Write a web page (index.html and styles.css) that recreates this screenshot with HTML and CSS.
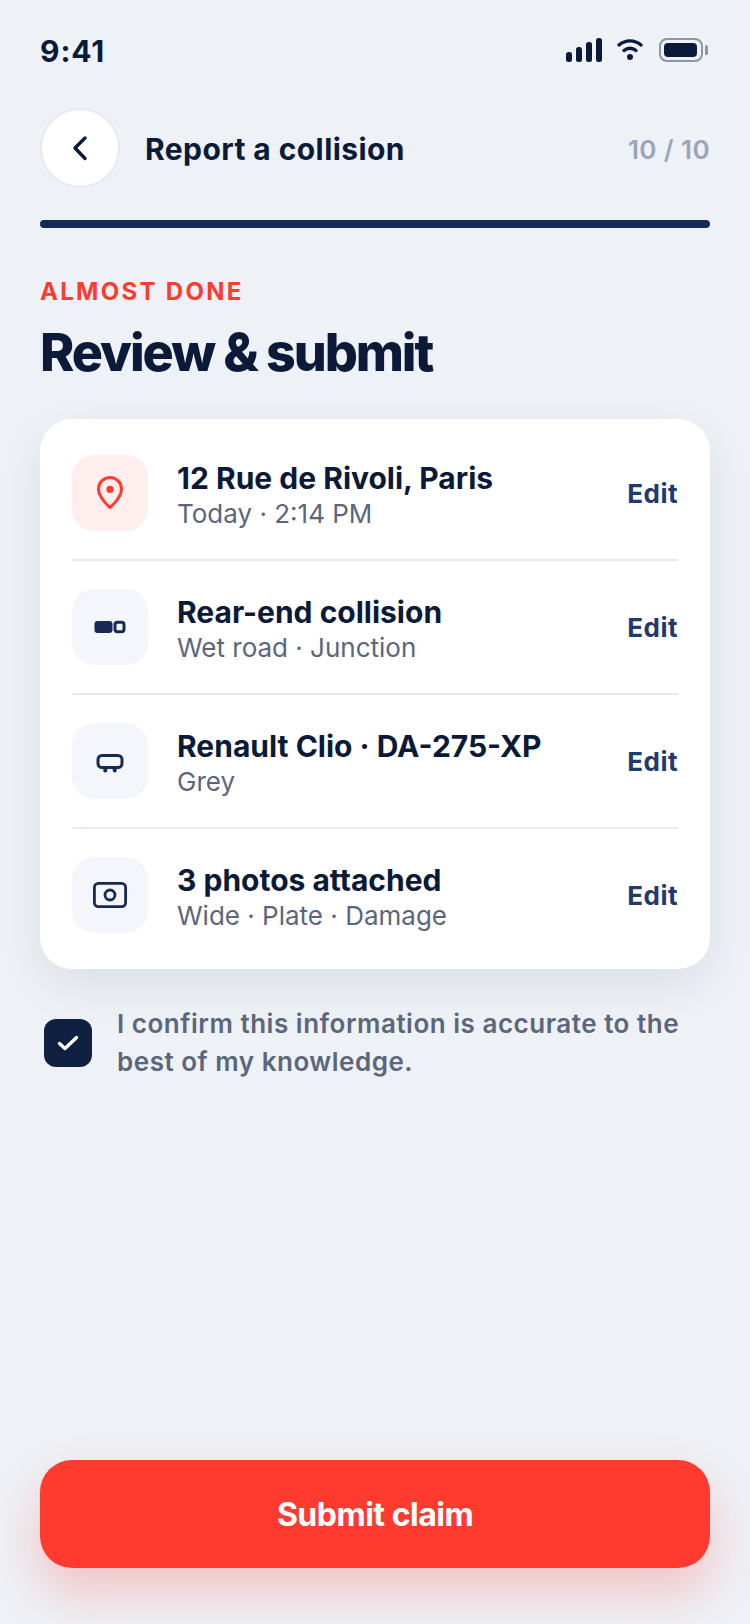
FILE: index.html
```html
<!DOCTYPE html>
<html>

<head>
    <meta charset="utf-8">
    <title>Report a collision</title>
    <link rel="stylesheet" href="styles.css">
</head>

<body>
    <div class="screen">
        <div class="status">
            <span class="time">9:41</span>
            <div class="status-icons">
                <svg class="signal" width="36" height="24" viewBox="0 0 36 24">
                    <rect x="0" y="14" width="6" height="10" rx="2.500" fill="#0b1a38" />
                    <rect x="10" y="9" width="6" height="15" rx="2.500" fill="#0b1a38" />
                    <rect x="20" y="4" width="6" height="20" rx="2.500" fill="#0b1a38" />
                    <rect x="30" y="0" width="6" height="24" rx="2.500" fill="#0b1a38" />
                </svg>
                <svg class="wifi" width="26" height="24" viewBox="0 0 26 24" fill="none" stroke="#0b1a38" stroke-width="3.400" stroke-linecap="round">
                    <path d="M2 7C8.500 1.500 17.500 1.500 24 7" />
                    <path d="M7 12.500C10.500 9.500 15.500 9.500 19 12.500" />
                    <circle cx="13" cy="19" r="3" fill="#0b1a38" stroke="none" />
                </svg>
                <svg width="49" height="24" viewBox="0 0 49 24">
                    <rect x="1" y="1" width="42" height="22" rx="7" fill="none" stroke="#8e95a6" stroke-width="2" />
                    <rect x="5" y="5" width="33" height="14" rx="4" fill="#0b1a38" />
                    <rect x="46" y="7" width="3" height="10" rx="1.500" fill="#8e95a6" />
                </svg>
            </div>
        </div>

        <div class="nav">
            <div class="back">
                <svg width="24" height="28" viewBox="0 0 24 28" fill="none" stroke="#0b1a38" stroke-width="3.400" stroke-linecap="round" stroke-linejoin="round">
                    <path d="M17 4L7 14L17 24.500" />
                </svg>
            </div>
            <div class="nav-title">Report a collision</div>
            <div class="count">10 / 10</div>
        </div>

        <div class="progress"></div>

        <div class="eyebrow">ALMOST DONE</div>
        <h1>Review &amp; submit</h1>

        <div class="card">
            <div class="row">
                <div class="tile tile-red">
                    <svg width="32" height="36" viewBox="0 0 32 36" fill="none">
                        <path d="M16 32.500C16 32.500 4.500 23 4.500 14C4.500 7.600 9.600 2.500 16 2.500C22.400 2.500 27.500 7.600 27.500 14C27.500 23 16 32.500 16 32.500Z" stroke="#ff3b30" stroke-width="3" stroke-linejoin="round" />
                        <circle cx="16" cy="14.300" r="3.600" fill="#ff3b30" />
                    </svg>
                </div>
                <div class="info">
                    <div class="name">12 Rue de Rivoli, Paris</div>
                    <div class="sub">Today · 2:14 PM</div>
                </div>
                <div class="edit">Edit</div>
            </div>
            <div class="row">
                <div class="tile">
                    <svg width="32" height="14" viewBox="0 0 32 14" fill="none">
                        <rect x="0.500" y="1" width="18" height="12" rx="3" fill="#152b55" />
                        <rect x="21" y="2.200" width="9" height="9.600" rx="2.500" stroke="#152b55" stroke-width="3" />
                    </svg>
                </div>
                <div class="info">
                    <div class="name">Rear-end collision</div>
                    <div class="sub">Wet road · Junction</div>
                </div>
                <div class="edit">Edit</div>
            </div>
            <div class="row">
                <div class="tile">
                    <svg width="28" height="24" viewBox="0 0 28 24" fill="none">
                        <rect x="2" y="6.500" width="24" height="12" rx="4" stroke="#152b55" stroke-width="3" />
                        <rect x="7.300" y="18" width="4" height="5.500" rx="2" fill="#152b55" />
                        <rect x="16.700" y="18" width="4" height="5.500" rx="2" fill="#152b55" />
                    </svg>
                </div>
                <div class="info">
                    <div class="name">Renault Clio · DA-275-XP</div>
                    <div class="sub">Grey</div>
                </div>
                <div class="edit">Edit</div>
            </div>
            <div class="row">
                <div class="tile">
                    <svg width="34" height="26" viewBox="0 0 34 26" fill="none" stroke="#152b55" stroke-width="2.800">
                        <rect x="1.400" y="1.400" width="31.200" height="23.200" rx="4" />
                        <circle cx="17" cy="13" r="5" />
                    </svg>
                </div>
                <div class="info">
                    <div class="name">3 photos attached</div>
                    <div class="sub">Wide · Plate · Damage</div>
                </div>
                <div class="edit">Edit</div>
            </div>
        </div>

        <div class="confirm">
            <div class="checkbox">
                <svg width="24" height="20" viewBox="0 0 24 20" fill="none" stroke="#fff" stroke-width="3.400" stroke-linecap="round" stroke-linejoin="round">
                    <path d="M3.500 10.500L9 15.500L20.500 4.500" />
                </svg>
            </div>
            <div class="confirm-text">I confirm this information is accurate to the best of my knowledge.</div>
        </div>

        <div class="submit">Submit claim</div>
    </div>
</body>

</html>
```

FILE: styles.css
```css
* {
    box-sizing: border-box;
}

html,
body {
    margin: 0;
    padding: 0;
}

body {
    width: 750px;
    height: 1624px;
    overflow: hidden;
    background-color: #eef1f6;
    font-family: Inter, 'Noto Sans', sans-serif;
    color: #0b1a38;
}

.screen {
    height: 1624px;
    padding: 0 40px;
    display: flex;
    flex-direction: column;
}

.status {
    height: 108px;
    padding-top: 32px;
    display: flex;
    justify-content: space-between;
    align-items: flex-start;
}

.time {
    font-size: 30px;
    line-height: 38px;
    font-weight: 700;
    letter-spacing: 0.9px;
}

.status-icons {
    display: flex;
    align-items: center;
    padding-top: 6px;
    padding-right: 2px;
}

.signal {
    margin-right: 15px;
}

.wifi {
    margin-right: 16px;
}

.nav {
    height: 80px;
    display: flex;
    align-items: center;
}

.back {
    width: 80px;
    height: 80px;
    border-radius: 50%;
    background-color: #fff;
    border: 2px solid #e6e9f1;
    display: flex;
    align-items: center;
    justify-content: center;
    margin-right: 25px;
}

.nav-title {
    flex: 1;
    padding-top: 2px;
    font-size: 30px;
    font-weight: 700;
    letter-spacing: 0.42px;
}

.count {
    padding-top: 2px;
    font-size: 26px;
    font-weight: 600;
    letter-spacing: 0.4px;
    color: #9aa5bb;
}

.progress {
    height: 8px;
    margin-top: 32px;
    border-radius: 4px;
    background-color: #152b55;
}

.eyebrow {
    margin-top: 49px;
    font-size: 24px;
    line-height: 30px;
    font-weight: 700;
    letter-spacing: 2.3px;
    color: #ff3b30;
}

h1 {
    margin: 16px 0 0 0;
    font-size: 52px;
    line-height: 60px;
    font-weight: 800;
    letter-spacing: -2.08px;
}

.card {
    margin-top: 36px;
    padding: 8px 32px;
    border-radius: 32px;
    background-color: #fff;
    box-shadow: 0 16px 48px rgba(15, 32, 64, 0.08);
}

.row {
    height: 134px;
    display: flex;
    align-items: center;
    border-bottom: 2px solid #e6e9f1;
}

.row:last-child {
    height: 132px;
    border-bottom: none;
}

.tile {
    width: 76px;
    height: 76px;
    border-radius: 22px;
    background-color: #f4f6fb;
    display: flex;
    align-items: center;
    justify-content: center;
    margin-right: 29px;
}

.tile-red {
    background-color: #ffeeed;
}

.info {
    flex: 1;
    padding-top: 3px;
}

.name {
    font-size: 30px;
    line-height: 36px;
    font-weight: 700;
}

.sub {
    margin-top: 2px;
    font-size: 26px;
    line-height: 32px;
    color: #5b667c;
}

.edit {
    font-size: 26px;
    font-weight: 700;
    letter-spacing: 0.5px;
    color: #1e3a6e;
}

.confirm {
    margin-top: 36px;
    padding-left: 4px;
    display: flex;
    align-items: center;
}

.checkbox {
    flex: none;
    width: 48px;
    height: 48px;
    border-radius: 12px;
    background-color: #0f2040;
    display: flex;
    align-items: center;
    justify-content: center;
    margin-right: 25px;
}

.confirm-text {
    font-size: 26px;
    line-height: 38px;
    font-weight: 600;
    letter-spacing: 0.52px;
    color: #5b667c;
}

.submit {
    margin-top: auto;
    margin-bottom: 56px;
    height: 108px;
    border-radius: 32px;
    background-color: #ff3b30;
    box-shadow: 0 24px 48px rgba(255, 59, 48, 0.25);
    color: #fff;
    font-size: 32px;
    font-weight: 700;
    letter-spacing: -0.5px;
    display: flex;
    align-items: center;
    justify-content: center;
}
```
